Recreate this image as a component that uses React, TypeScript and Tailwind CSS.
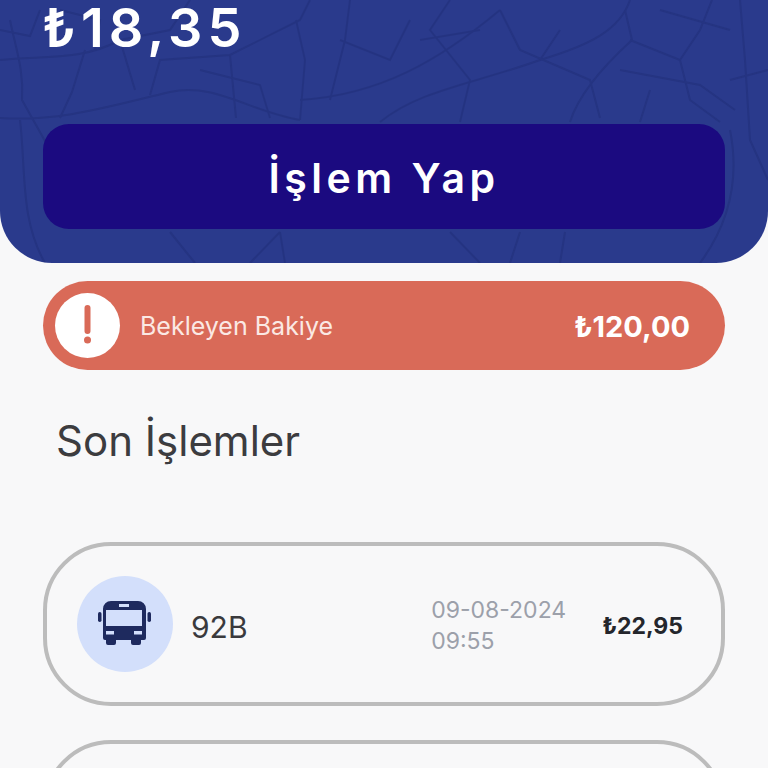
import React from "react";

const roads = [
  "M0 118 C60 122 110 106 170 92 C215 82 250 112 300 120",
  "M10 20 C16 50 24 70 22 100 L50 150",
  "M0 60 C40 55 80 62 120 40 L170 30 L190 0",
  "M85 50 L72 92 L60 118",
  "M150 95 L160 60 L230 55 L300 20 L310 0",
  "M230 55 L236 118",
  "M300 120 L305 60 L296 20",
  "M300 100 C380 95 440 60 500 10",
  "M380 122 C420 90 470 85 540 60 C590 45 620 30 630 0",
  "M570 122 C580 90 610 60 632 40 L625 10",
  "M630 40 L680 60 L690 100 L720 122",
  "M680 60 L700 30 L712 0",
  "M460 122 L470 80 L430 30 L450 0",
  "M540 60 L560 30",
  "M730 80 L768 70",
  "M740 0 L745 60 L750 140 L768 180",
  "M620 70 L700 85 L735 110",
  "M0 30 L30 36 L40 10",
  "M120 40 L135 90",
  "M340 40 L390 60 L410 20",
  "M170 232 L195 263",
  "M280 232 L250 263 M280 232 L285 263",
  "M450 232 L480 263 M520 232 L510 263",
  "M565 232 L560 263",
  "M20 120 C26 170 20 220 45 263",
  "M730 130 C740 180 728 225 700 263",
  "M60 10 L100 20 L95 50 M200 70 L260 85 L270 118",
  "M500 10 L520 50 L590 80 L600 118 M650 90 L640 122",
  "M350 0 L345 40 L330 100 M420 40 L480 30 M660 10 L730 30",
];

export default function App() {
  return (
    <div className="h-[768px] w-[768px] overflow-hidden bg-[#f8f8f9] font-['Inter',sans-serif]">
      <header className="relative h-[263px] overflow-hidden rounded-b-[52px] bg-[#2a3a8c] px-[43px]">
        <svg
          className="absolute inset-0 opacity-50 blur-[0.6px]"
          width="768"
          height="263"
          viewBox="0 0 768 263"
          fill="none"
          stroke="#202e78"
          strokeWidth="2"
        >
          {roads.map((d) => (
            <path key={d} d={d} />
          ))}
        </svg>
        <div className="relative flex h-[124px] items-start">
          <p className="ml-[-1px] text-[54px] leading-[55px] font-semibold tracking-[5px] text-white">₺18,35</p>
        </div>
        <button className="relative flex h-[105px] w-[682px] items-center justify-center rounded-[26px] bg-[#1b0a80] pt-[4px] text-[41px] font-semibold tracking-[4.500px] text-white">
          İşlem Yap
        </button>
      </header>

      <section className="mx-[43px] mt-[18px] flex h-[89px] items-center rounded-full bg-[#d96a58] pr-[35px] pl-[12px]">
        <div className="flex h-[65px] w-[65px] items-center justify-center rounded-full bg-white">
          <svg width="65" height="65" viewBox="0 0 65 65" fill="#d96a58">
            <rect x="29.500" y="12" width="6" height="29" rx="3" />
            <circle cx="32.500" cy="47" r="3.500" />
          </svg>
        </div>
        <span className="mt-[2px] ml-[20px] text-[25px] text-[#fbe9e4]">Bekleyen Bakiye</span>
        <span className="mt-[2px] ml-auto text-[29px] font-bold text-white">₺120,00</span>
      </section>

      <h2 className="mt-[41px] ml-[56px] text-[42px] leading-[60px] font-normal text-[#3c3c3f]">
        Son İşlemler
      </h2>

      <article className="mx-[43px] mt-[71px] flex h-[164px] items-center rounded-[68px] border-[4px] border-[#bcbcbc] pr-[38px] pl-[30px]">
        <div className="flex h-[96px] w-[96px] shrink-0 items-center justify-center rounded-full bg-[#d3dffb]">
          <svg className="mb-[2px]" width="54" height="44" viewBox="0 0 54 44" fill="#1e2a5e">
            <path
              fillRule="evenodd"
              d="M5 8a8 8 0 0 1 8-8h27a8 8 0 0 1 8 8v29a2 2 0 0 1-2 2h-3v3a2 2 0 0 1-2 2h-6a2 2 0 0 1-2-2v-3H18v3a2 2 0 0 1-2 2h-6a2 2 0 0 1-2-2v-3H7a2 2 0 0 1-2-2ZM8 9v16h36V9ZM21 3v3h10V3ZM8 30v3.500h8V30ZM36 30v3.500h8V30Z"
            />
            <rect x="0" y="11" width="3.500" height="10" rx="1.700" />
            <rect x="49.500" y="11" width="3.500" height="10" rx="1.700" />
          </svg>
        </div>
        <span className="mt-[6px] ml-[18px] text-[30px] text-[#3a3a3d]">92B</span>
        <div className="mt-[3px] ml-auto text-[23px] leading-[31px] text-[#9ca0aa]">
          <div>09-08-2024</div>
          <div>09:55</div>
        </div>
        <span className="mt-[4px] ml-[36px] text-[23px] font-bold text-[#24262c]">₺22,95</span>
      </article>

      <article className="mx-[43px] mt-[34px] h-[164px] rounded-[68px] border-[4px] border-[#bcbcbc]" />
    </div>
  );
}
